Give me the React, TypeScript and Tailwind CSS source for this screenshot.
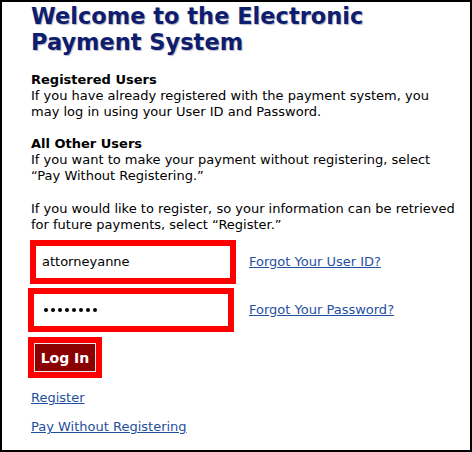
import React from 'react';

export default function App() {
  return (
    <div className="w-[472px] h-[452px] bg-white border-2 border-black overflow-hidden font-['DejaVu_Sans',Verdana,sans-serif] text-[13px] leading-[16px] text-black">
      <div className="pl-[29px] pr-3">
        <h1 className="text-[22.5px] leading-[26px] font-bold text-[#0f1d6e] [text-shadow:1px_1px_1px_#b8b8c8] pt-[1px]">
          Welcome to the Electronic
          <br />
          Payment System
        </h1>

        <div className="mt-[17px]">
          <div className="font-bold">Registered Users</div>
          <p>If you have already registered with the payment system, you may log in using your User ID and Password.</p>
        </div>

        <div className="mt-[16px]">
          <div className="font-bold">All Other Users</div>
          <p>If you want to make your payment without registering, select “Pay Without Registering.”</p>
        </div>

        <p className="mt-[17px]">
          If you would like to register, so your information can be retrieved for future payments, select “Register.”
        </p>
      </div>

      <div className="pl-[26px] mt-[7px]">
        <div className="flex items-center">
          <div className="ml-[2px] w-[206px] h-[44px] border-[6px] border-[#ff0000] bg-white flex items-center pl-[6px]">
            attorneyanne
          </div>
          <a href="#" className="ml-[13px] text-[#1f4fa0] underline">Forgot Your User ID?</a>
        </div>
        <div className="flex items-center mt-[4px]">
          <div className="w-[206px] h-[44px] border-[6px] border-[#ff0000] bg-white flex items-center pl-[10px] gap-[3px]" aria-label="password">
            {Array.from({ length: 8 }).map((_, i) => (
              <span key={i} className="w-[4px] h-[4px] rounded-full bg-black" />
            ))}
          </div>
          <a href="#" className="ml-[15px] text-[#1f4fa0] underline">Forgot Your Password?</a>
        </div>
        <div className="mt-[5px] w-[74px] h-[41px] border-[6px] border-[#ff0000] bg-[#ff0000] flex">
          <button className="w-full h-full bg-[#8b0000] border border-[#e8e8e8] text-white font-bold text-[14px] leading-[16px]">
            Log In
          </button>
        </div>
      </div>

      <div className="pl-[29px] mt-[12px] flex flex-col gap-[13px]">
        <a href="#" className="text-[#1f4fa0] underline w-fit">Register</a>
        <a href="#" className="text-[#1f4fa0] underline w-fit">Pay Without Registering</a>
      </div>
    </div>
  );
}
